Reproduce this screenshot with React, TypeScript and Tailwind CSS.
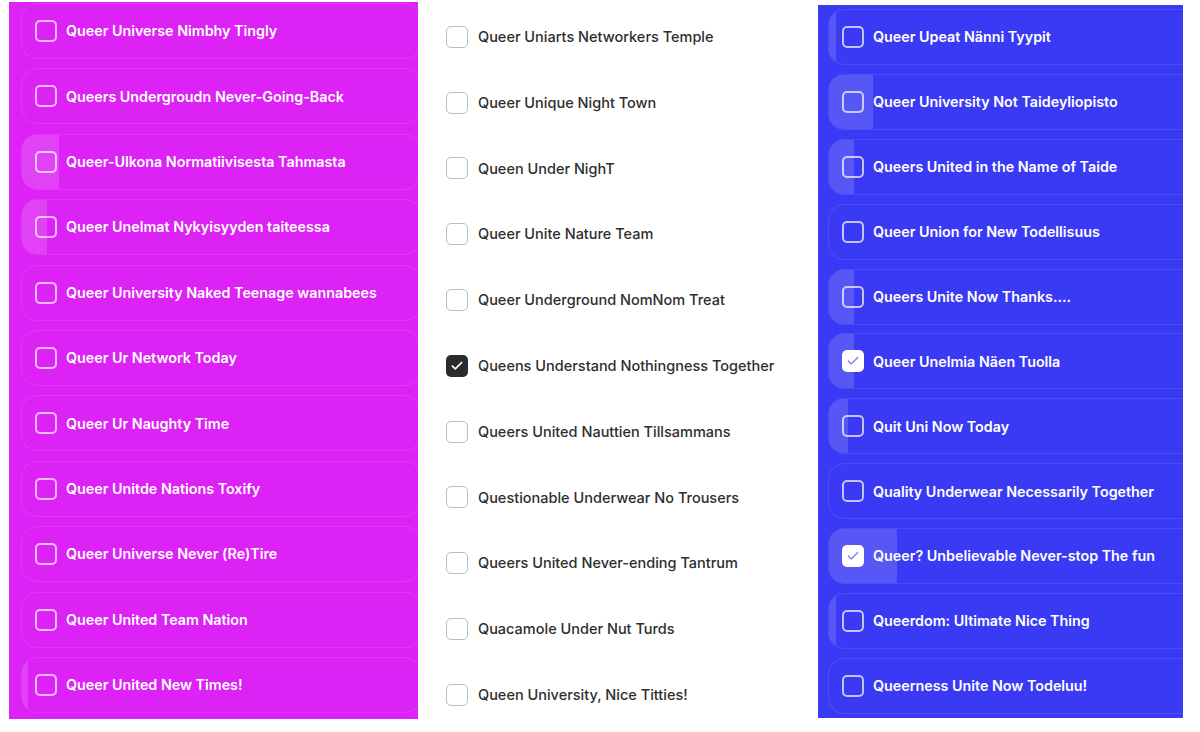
import { Check } from 'lucide-react';

type Item = { label: string; fill: number; checked?: boolean };

const pinkItems: Item[] = [
  { label: 'Queer Universe Nimbhy Tingly', fill: 0 },
  { label: 'Queers Undergroudn Never-Going-Back', fill: 0 },
  { label: 'Queer-Ulkona Normatiivisesta Tahmasta', fill: 37 },
  { label: 'Queer Unelmat Nykyisyyden taiteessa', fill: 25 },
  { label: 'Queer University Naked Teenage wannabees', fill: 0 },
  { label: 'Queer Ur Network Today', fill: 0 },
  { label: 'Queer Ur Naughty Time', fill: 0 },
  { label: 'Queer Unitde Nations Toxify', fill: 0 },
  { label: 'Queer Universe Never (Re)Tire', fill: 0 },
  { label: 'Queer United Team Nation', fill: 0 },
  { label: 'Queer United New Times!', fill: 6 },
];

const plainItems: Item[] = [
  { label: 'Queer Uniarts Networkers Temple', fill: 0 },
  { label: 'Queer Unique Night Town', fill: 0 },
  { label: 'Queen Under NighT', fill: 0 },
  { label: 'Queer Unite Nature Team', fill: 0 },
  { label: 'Queer Underground NomNom Treat', fill: 0 },
  { label: 'Queens Understand Nothingness Together', fill: 0, checked: true },
  { label: 'Queers United Nauttien Tillsammans', fill: 0 },
  { label: 'Questionable Underwear No Trousers', fill: 0 },
  { label: 'Queers United Never-ending Tantrum', fill: 0 },
  { label: 'Quacamole Under Nut Turds', fill: 0 },
  { label: 'Queen University, Nice Titties!', fill: 0 },
];

const blueItems: Item[] = [
  { label: 'Queer Upeat Nänni Tyypit', fill: 7 },
  { label: 'Queer University Not Taideyliopisto', fill: 44 },
  { label: 'Queers United in the Name of Taide', fill: 25 },
  { label: 'Queer Union for New Todellisuus', fill: 0 },
  { label: 'Queers Unite Now Thanks....', fill: 25 },
  { label: 'Queer Unelmia Näen Tuolla', fill: 25, checked: true },
  { label: 'Quit Uni Now Today', fill: 19 },
  { label: 'Quality Underwear Necessarily Together', fill: 0 },
  { label: 'Queer? Unbelievable Never-stop The fun', fill: 68, checked: true },
  { label: 'Queerdom: Ultimate Nice Thing', fill: 7 },
  { label: 'Queerness Unite Now Todeluu!', fill: 0 },
];

const font = { fontFamily: 'Inter, "Noto Sans", sans-serif' };

function PanelRow({ item, checkColor }: { item: Item; checkColor: string }) {
  return (
    <div className="relative flex h-14 w-[400px] shrink-0 items-center overflow-hidden rounded-2xl border border-white/10">
      {item.fill > 0 && (
        <div className="absolute inset-y-0 left-0 bg-white/15" style={{ width: item.fill }} />
      )}
      <div className="relative flex items-center gap-[9px] pl-[13px]">
        {item.checked ? (
          <div className="flex h-[22px] w-[22px] items-center justify-center rounded-[5px] bg-white">
            <Check size={14} strokeWidth={2.25} style={{ color: checkColor }} />
          </div>
        ) : (
          <div className="h-[22px] w-[22px] rounded-[5px] border-2 border-white/70" />
        )}
        <span className="whitespace-nowrap text-[14.3px] font-semibold text-white">{item.label}</span>
      </div>
    </div>
  );
}

export default function App() {
  return (
    <div className="flex h-[732px] w-[1200px] bg-white" style={font}>
      {/* pink column */}
      <div className="ml-[9px] mt-[2px] flex h-[717px] w-[409px] flex-col gap-[9.4px] overflow-hidden bg-[#dc22f5] pl-[12px] pt-[1px]">
        {pinkItems.map((it) => (
          <PanelRow key={it.label} item={it} checkColor="#e58af8" />
        ))}
      </div>

      {/* plain column */}
      <div className="flex w-[400px] flex-col pt-[4px]">
        {plainItems.map((it) => (
          <div key={it.label} className="flex h-[65.8px] shrink-0 items-center gap-[10px] pl-[28px]">
            {it.checked ? (
              <div className="flex h-[22px] w-[22px] items-center justify-center rounded-[5px] bg-[#2b2b2b]">
                <Check size={14} strokeWidth={3} className="text-white" />
              </div>
            ) : (
              <div className="h-[22px] w-[22px] rounded-[5px] border-[1.5px] border-[#bdbdbd]" />
            )}
            <span className="whitespace-nowrap text-[14.5px] font-[550] text-[#2e2e2e]">{it.label}</span>
          </div>
        ))}
      </div>

      {/* blue column */}
      <div className="mt-[5px] flex h-[713px] w-[365px] flex-col gap-[8.9px] overflow-hidden bg-[#3a3af5] pl-[10px] pt-[4px]">
        {blueItems.map((it) => (
          <PanelRow key={it.label} item={it} checkColor="#7d7df8" />
        ))}
      </div>
    </div>
  );
}
